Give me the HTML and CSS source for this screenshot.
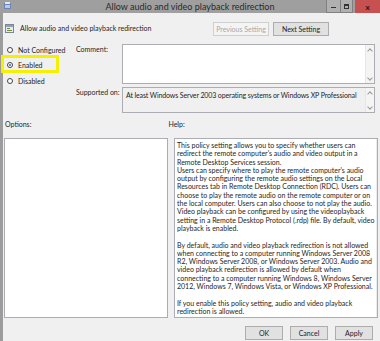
FILE: index.html
```html
<!DOCTYPE html>
<html>
<head>
<meta charset="utf-8">
<link rel="stylesheet" href="styles.css">
</head>
<body>
<div class="win">
  <div class="titlebar">
    <svg class="appicon" width="9" height="9" viewBox="0 0 9 9"><rect x="1" y="2" width="7" height="6" fill="#6b86b5"/><rect x="2" y="1" width="5" height="2" fill="#dfe8f5"/><rect x="2" y="4" width="5" height="3" fill="#b9cbe6"/></svg>
    <span class="title">Allow audio and video playback redirection</span>
    <div class="controls">
      <span class="ctl min"><i></i></span>
      <span class="ctl max"><i></i></span>
      <span class="ctl close">x</span>
    </div>
  </div>
  <div class="frame">
    <div class="content">
      <div class="head">
        <svg class="policyicon" width="9" height="9" viewBox="0 0 9 9"><rect x="0.5" y="0.5" width="8" height="8" fill="#e8ecef" stroke="#7b8793"/><rect x="1" y="1" width="7" height="2" fill="#8ea1b5"/><rect x="2" y="4" width="3" height="1" fill="#6e8b3d"/><rect x="2" y="6" width="5" height="1" fill="#6e8b3d"/></svg>
        <span class="headtext">Allow audio and video playback redirection</span>
        <div class="nav">
          <span class="btn disabled prev">Previous Setting</span>
          <span class="btn next">Next Setting</span>
        </div>
      </div>
      <div class="upper">
        <div class="radios">
          <div class="radio"><span class="dot"></span>Not Configured</div>
          <div class="radio"><span class="dot on"></span>Enabled</div>
          <div class="radio"><span class="dot"></span>Disabled</div>
        </div>
        <div class="lbl">Comment:</div>
        <div class="box comment">
          <div class="boxtext"></div>
          <div class="sbar"><span class="arr up"></span><span class="arr down"></span></div>
        </div>
        <div class="lbl">Supported on:</div>
        <div class="box supported">
          <div class="boxtext">At least Windows Server 2003 operating systems or Windows XP Professional</div>
          <div class="sbar"><span class="arr up"></span><span class="arr down"></span></div>
        </div>
      </div>
      <div class="labels">
        <span class="optlbl">Options:</span>
        <span class="helplbl">Help:</span>
      </div>
      <div class="panes">
        <div class="options"></div>
        <div class="help">
          <div class="helptext">This policy setting allows you to specify whether users can<br>redirect the remote computer's audio and video output in a<br>Remote Desktop Services session.<br>Users can specify where to play the remote computer's audio<br>output by configuring the remote audio settings on the Local<br>Resources tab in Remote Desktop Connection (RDC). Users can<br>choose to play the remote audio on the remote computer or on<br>the local computer. Users can also choose to not play the audio.<br>Video playback can be configured by using the videoplayback<br>setting in a Remote Desktop Protocol (.rdp) file. By default, video<br>playback is enabled.<br><br>By default, audio and video playback redirection is not allowed<br>when connecting to a computer running Windows Server 2008<br>R2, Windows Server 2008, or Windows Server 2003. Audio and<br>video playback redirection is allowed by default when<br>connecting to a computer running Windows 8, Windows Server<br>2012, Windows 7, Windows Vista, or Windows XP Professional.<br><br>If you enable this policy setting, audio and video playback<br>redirection is allowed.</div>
          <div class="sbar big">
            <span class="arr up"></span>
            <span class="thumb"><i></i><i></i><i></i></span>
            <span class="spacer"></span>
            <span class="arr down"></span>
          </div>
        </div>
      </div>
      <div class="footer">
        <span class="btn fbtn">OK</span>
        <span class="btn fbtn">Cancel</span>
        <span class="btn fbtn">Apply</span>
      </div>
    </div>
    <div class="highlight"></div>
  </div>
</div>
</body>
</html>
```

FILE: styles.css
```css
* { box-sizing: border-box; }
html, body { margin: 0; padding: 0; }
body {
  width: 380px;
  height: 341px;
  overflow: hidden;
  background: #f0f0f0;
  font-family: "Lato", "Noto Sans", sans-serif;
  font-size: 7px;
  color: #1e1e1e;
}
.win { width: 380px; height: 341px; display: flex; flex-direction: column; }
.titlebar {
  height: 13px;
  background: #9f9f9f;
  display: flex;
  align-items: center;
  position: relative;
  flex: none;
}
.appicon { margin-left: 3px; margin-top: -3px; }
.title {
  position: absolute;
  left: 0; right: 0;
  text-align: center;
  font-size: 9px;
  color: #2a2a2a;
  line-height: 13px;
}
.controls { margin-left: auto; display: flex; height: 13px; position: relative; }
.ctl { display: flex; align-items: center; justify-content: center; height: 13px; }
.min, .max { width: 13px; border: 1px solid #808080; border-top: none; background: #b0b0b0; }
.min { width: 14px; border-right: none; }
.min i { width: 5px; height: 1px; background: #333; margin-top: 3px; }
.max i { width: 5px; height: 5px; border: 1px solid #333; border-top-width: 2px; }
.close { width: 25px; background: #c75050; color: #2a1010; font-size: 8px; font-weight: bold; margin-left: 2px; }
.frame {
  flex: 1;
  display: flex;
  border-left: 3px solid #9c9c9c;
  position: relative;
}
.content { flex: 1; display: flex; flex-direction: column; }
.head { display: flex; align-items: center; height: 23px; padding: 8px 0 0 2px; }
.policyicon { flex: none; }
.headtext { margin-left: 6px; margin-top: -1px; }
.nav { margin-left: auto; margin-right: 51px; display: flex; gap: 4px; }
.btn {
  display: flex; align-items: center; justify-content: center;
  height: 14px;
  border: 1px solid #adadad;
  background: #e1e1e1;
  color: #1e1e1e;
}
.prev, .next { width: 56px; }
.btn.disabled { background: #f4f4f4; border-color: #d0d0d0; color: #a8a8a8; }
.upper {
  display: grid;
  grid-template-columns: 72px 47px 253px;
  grid-template-rows: 40px 26px;
  row-gap: 3px;
  margin-top: 8px;
}
.radios {
  grid-row: 1 / span 2;
  grid-column: 1;
  display: flex; flex-direction: column;
  margin-top: -2px;
  padding-left: 4px;
}
.radio { height: 15.5px; display: flex; align-items: center; gap: 5px; }
.dot {
  width: 6px; height: 6px; border-radius: 50%;
  border: 1px solid #444; background: #fff; flex: none;
  display: flex; align-items: center; justify-content: center;
}
.dot.on::after { content: ""; width: 2px; height: 2px; border-radius: 50%; background: #2b6fb6; }
.lbl { padding-top: 1px; padding-left: 1px; line-height: 8px; }
.box { border: 1px solid #abadb3; background: #fff; display: flex; }
.supported { background: #f0f0f0; }
.boxtext { flex: 1; padding: 2px 3px; line-height: 8px; }
.supported .boxtext { padding-top: 3px; white-space: nowrap; letter-spacing: -0.12px; }
.sbar {
  width: 9px; flex: none;
  display: flex; flex-direction: column; justify-content: space-between;
  background: #f4f4f4;
  border-left: 1px solid #e6e6e6;
}
.arr { height: 9px; display: flex; align-items: center; justify-content: center; }
.arr::after {
  content: ""; width: 3px; height: 3px;
  border-left: 1px solid #9a9a9a; border-top: 1px solid #9a9a9a;
}
.arr.up::after { transform: translateY(1px) rotate(45deg); }
.arr.down::after { transform: translateY(-1px) rotate(-135deg); }
.labels { display: flex; height: 25px; align-items: flex-start; padding-top: 7px; line-height: 8px; }
.optlbl { margin-left: 2px; }
.helplbl { margin-left: 137px; }
.panes {
  display: grid;
  grid-template-columns: 164px 204px;
  column-gap: 6px;
  height: 180px;
  margin-left: 1px;
}
.options { border: 1px solid #abadb3; background: #fff; }
.help { border: 1px solid #abadb3; background: #fff; display: flex; overflow: hidden; }
.helptext { flex: 1; padding: 2px 2px; line-height: 8.3px; white-space: nowrap; }
.sbar.big { justify-content: flex-start; background: #f0f0f0; border-left: 1px solid #ececec; }
.thumb {
  height: 115px; margin: 1px 1px 0 1px;
  background: #cdcdcd; border: 1px solid #c2c2c2;
  display: flex; flex-direction: column; align-items: center; justify-content: center; gap: 1px;
}
.thumb i { width: 4px; height: 1px; background: #8f8f8f; }
.spacer { flex: 1; }
.footer { display: flex; justify-content: flex-end; gap: 7px; padding: 8px 7px 0 0; }
.fbtn { width: 38px; }
.highlight {
  position: absolute;
  left: -2px; top: 42px;
  width: 58px; height: 18px;
  border: 3px solid #f5f000;
}
```
